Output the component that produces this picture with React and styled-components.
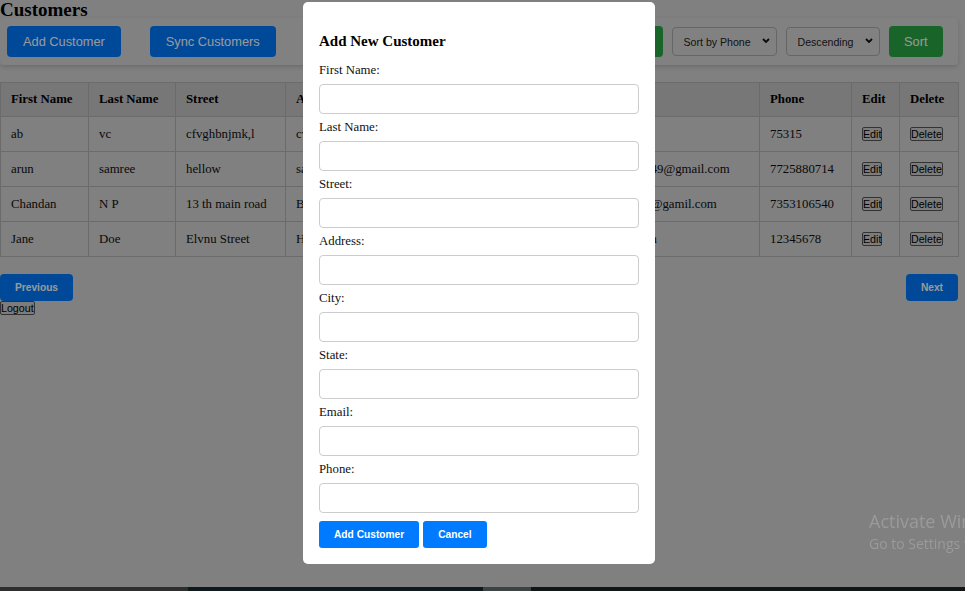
import React from 'react';
import styled, { createGlobalStyle } from 'styled-components';

const customers = [
  { first: 'ab', last: 'vc', street: 'cfvghbnjmk,l', address: 'cvbnm', city: 'gfhj', state: 'ka', email: 'ab@gmail.com', phone: '75315' },
  { first: 'arun', last: 'samree', street: 'hellow', address: 'samree', city: 'Mysore', state: 'KA', email: 'arunkumar12349@gmail.com', phone: '7725880714' },
  { first: 'Chandan', last: 'N P', street: '13 th main road', address: 'Bangalore', city: 'Bangalore', state: 'KA', email: 'chandannp123@gamil.com', phone: '7353106540' },
  { first: 'Jane', last: 'Doe', street: 'Elvnu Street', address: 'Hyderabad', city: 'Delhi', state: 'DL', email: 'jane@mail.com', phone: '12345678' },
];

const fields = ['First Name', 'Last Name', 'Street', 'Address', 'City', 'State', 'Email', 'Phone'];

const GlobalStyle = createGlobalStyle`
  html, body {
    margin: 0;
    padding: 0;
    background: #d5d5d5;
    font-family: "Liberation Serif", "Times New Roman", serif;
    overflow: hidden;
  }
`;

const Page = styled.div`
  width: 958px;
`;

const Title = styled.h2`
  margin: 0;
  font-size: 19px;
  line-height: 20px;
  height: 18px;
  font-weight: bold;
`;

const Toolbar = styled.div`
  display: flex;
  justify-content: space-between;
  align-items: center;
  height: 47px;
  padding: 0 15px 0 7px;
  background: #d8d8d8;
  box-shadow: 0 2px 4px rgba(0, 0, 0, 0.15);
  border-radius: 4px;
`;

const Group = styled.div`
  display: flex;
  align-items: center;
  gap: ${(p) => p.gap}px;
`;

const ActionButton = styled.button`
  height: 31px;
  padding: 0 ${(p) => p.pad || 16}px;
  border: none;
  border-radius: 4px;
  background: ${(p) => (p.green ? '#28a745' : '#007bff')};
  color: #fff;
  font-family: "Liberation Sans", Arial, sans-serif;
  font-size: 12.8px;
`;

const SearchInput = styled.input`
  width: 160px;
  height: 29px;
  box-sizing: border-box;
  border: 1px solid #aaa;
  border-radius: 4px;
  background: transparent;
`;

const SelectWrap = styled.div`
  position: relative;
  width: ${(p) => p.w}px;
  height: 29px;
`;

const Select = styled.select`
  appearance: none;
  width: 100%;
  height: 100%;
  padding: 0 0 0 11px;
  border: 1px solid #aaa;
  border-radius: 4px;
  background: transparent;
  color: #222;
  font-family: "Liberation Sans", Arial, sans-serif;
  font-size: 10.6px;
`;

const Chevron = styled.svg`
  position: absolute;
  right: 7px;
  top: 11px;
  width: 8px;
  height: 6px;
  pointer-events: none;
`;

const Table = styled.table`
  margin-top: 17px;
  width: 958px;
  border-collapse: collapse;
  table-layout: fixed;
  font-size: 12.8px;
`;

const Th = styled.th`
  text-align: left;
  padding: 9px 10px;
  line-height: 15px;
  background: #c6c6c6;
  border: 1px solid #b2b2b2;
  font-weight: bold;
  white-space: nowrap;
  overflow: hidden;
`;

const Td = styled.td`
  padding: 10px 10px 9px;
  line-height: 15px;
  border: 1px solid #b2b2b2;
  color: #111;
  white-space: nowrap;
  overflow: hidden;
`;

const SmallButton = styled.button`
  display: ${(p) => (p.block ? 'block' : 'inline-block')};
  padding: 0;
  font-family: "Liberation Sans", Arial, sans-serif;
  font-size: 10.67px;
  line-height: 12px;
  color: #000;
  background: #cfcfcf;
  border: 1px solid #555;
  border-radius: 2px;
`;

const Pagination = styled.div`
  display: flex;
  justify-content: space-between;
  margin-top: 17px;
`;

const PrimaryButton = styled.button`
  height: 27px;
  padding: 0 15px;
  border: none;
  border-radius: ${(p) => (p.small ? 3 : 4)}px;
  background: #007bff;
  color: #fff;
  font-family: "Liberation Sans", Arial, sans-serif;
  font-size: 10.2px;
  font-weight: bold;
`;

const Overlay = styled.div`
  position: fixed;
  inset: 0;
  background: rgba(0, 0, 0, 0.4);
  display: flex;
  justify-content: center;
  align-items: flex-start;
  padding: 2px 7px 0 0;
`;

const Modal = styled.div`
  width: 320px;
  padding: 16px;
  background: #fff;
  border-radius: 5px;
`;

const ModalTitle = styled.h3`
  margin: 15px 0 13px;
  font-size: 15px;
  line-height: 17px;
  font-weight: bold;
`;

const Label = styled.label`
  display: block;
  font-size: 12.8px;
  line-height: 15px;
  margin-bottom: 6px;
  color: #111;
`;

const Input = styled.input`
  display: block;
  box-sizing: border-box;
  width: 320px;
  height: 30px;
  margin-bottom: 6px;
  border: 1px solid #ccc;
  border-radius: 4px;
`;

const ModalActions = styled.div`
  display: flex;
  gap: 4px;
  margin-top: 8px;
`;

const Watermark = styled.div`
  position: fixed;
  left: 869px;
  top: 508px;
  white-space: nowrap;
  color: #9a9a9a;
  font-family: "Open Sans", "Noto Sans", sans-serif;
`;

const WatermarkLine = styled.div`
  font-size: ${(p) => p.size}px;
  line-height: ${(p) => p.lh}px;
`;

const Taskbar = styled.div`
  position: fixed;
  left: 0;
  right: 0;
  bottom: 0;
  height: 4px;
  display: flex;
`;

const TaskSegment = styled.div`
  width: ${(p) => p.w}px;
  flex: ${(p) => (p.grow ? 1 : 'none')};
  background: ${(p) => p.bg};
`;

const colWidths = [88, 87, 110, 110, 90, 80, 194, 92, 48, 59];
const headers = ['First Name', 'Last Name', 'Street', 'Address', 'City', 'State', 'Email', 'Phone', 'Edit', 'Delete'];

const Dropdown = ({ w, label }) => (
  <SelectWrap w={w}>
    <Select defaultValue={label}>
      <option value={label}>{label}</option>
    </Select>
    <Chevron viewBox="0 0 8 6">
      <path d="M1 1l3 3 3-3" fill="none" stroke="#111" strokeWidth="1.8" />
    </Chevron>
  </SelectWrap>
);

export default function App() {
  return (
    <>
      <GlobalStyle />
      <Page>
        <Title>Customers</Title>
        <Toolbar>
          <Group gap={29}>
            <ActionButton>Add Customer</ActionButton>
            <ActionButton>Sync Customers</ActionButton>
          </Group>
          <Group gap={9}>
            <SearchInput placeholder="Search" />
            <ActionButton green>Search</ActionButton>
            <Dropdown w={105} label="Sort by Phone" />
            <Dropdown w={94} label="Descending" />
            <ActionButton green pad={15.5}>Sort</ActionButton>
          </Group>
        </Toolbar>
        <Table>
          <colgroup>
            {colWidths.map((w, i) => (
              <col key={i} style={{ width: w }} />
            ))}
          </colgroup>
          <thead>
            <tr>
              {headers.map((h) => (
                <Th key={h}>{h}</Th>
              ))}
            </tr>
          </thead>
          <tbody>
            {customers.map((c) => (
              <tr key={c.first}>
                <Td>{c.first}</Td>
                <Td>{c.last}</Td>
                <Td>{c.street}</Td>
                <Td>{c.address}</Td>
                <Td>{c.city}</Td>
                <Td>{c.state}</Td>
                <Td>{c.email}</Td>
                <Td>{c.phone}</Td>
                <Td><SmallButton>Edit</SmallButton></Td>
                <Td><SmallButton>Delete</SmallButton></Td>
              </tr>
            ))}
          </tbody>
        </Table>
        <Pagination>
          <PrimaryButton>Previous</PrimaryButton>
          <PrimaryButton>Next</PrimaryButton>
        </Pagination>
        <SmallButton block>Logout</SmallButton>
      </Page>
      <Overlay>
        <Modal>
          <ModalTitle>Add New Customer</ModalTitle>
          {fields.map((f) => (
            <div key={f}>
              <Label>{f}:</Label>
              <Input type="text" />
            </div>
          ))}
          <ModalActions>
            <PrimaryButton small>Add Customer</PrimaryButton>
            <PrimaryButton small>Cancel</PrimaryButton>
          </ModalActions>
        </Modal>
      </Overlay>
      <Watermark>
        <WatermarkLine size={18} lh={26}>Activate Windows</WatermarkLine>
        <WatermarkLine size={14} lh={20}>Go to Settings to activate Windows.</WatermarkLine>
      </Watermark>
      <Taskbar>
        <TaskSegment w={188} bg="#2e2e2e" />
        <TaskSegment w={295} bg="#0e191b" />
        <TaskSegment w={48} bg="#3d4242" />
        <TaskSegment grow bg="#111515" />
      </Taskbar>
    </>
  );
}
